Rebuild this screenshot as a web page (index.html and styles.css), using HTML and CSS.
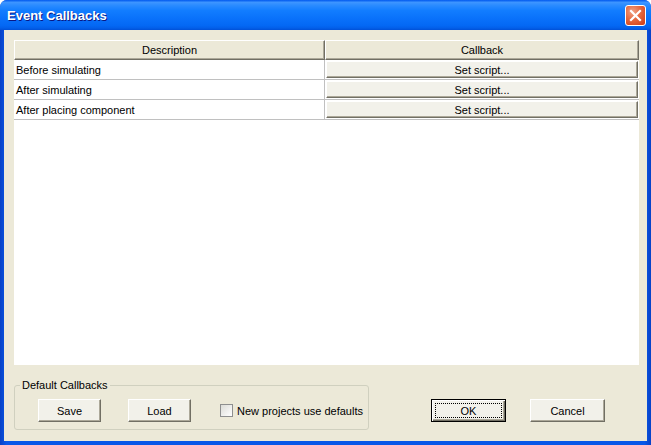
FILE: index.html
```html
<!DOCTYPE html>
<html lang="en">
<head>
    <meta name="viewport" content="width=device-width, initial-scale=1.0">
    <link rel="stylesheet" href="styles.css">
</head>
<body>
    <div class="window">
        <div class="titlebar">
            <span class="title">Event Callbacks</span>
            <button type="button" class="close">
                <svg width="13" height="13" viewBox="0 0 13 13">
                    <path d="M2 2 L11 11 M11 2 L2 11" stroke="#fff" stroke-width="2.2" stroke-linecap="square"/>
                </svg>
            </button>
        </div>
        <div class="client">
            <div class="grid">
                <div class="row head">
                    <div class="cell">Description</div>
                    <div class="cell">Callback</div>
                </div>
                <div class="row">
                    <div class="cell">Before simulating</div>
                    <div class="cell"><button type="button" class="btn slim">Set script...</button></div>
                </div>
                <div class="row">
                    <div class="cell">After simulating</div>
                    <div class="cell"><button type="button" class="btn slim">Set script...</button></div>
                </div>
                <div class="row">
                    <div class="cell">After placing component</div>
                    <div class="cell"><button type="button" class="btn slim">Set script...</button></div>
                </div>
            </div>
            <div class="bottom">
                <fieldset class="group">
                    <legend>Default Callbacks</legend>
                    <button type="button" class="btn">Save</button>
                    <button type="button" class="btn">Load</button>
                    <label class="check"><span class="box"></span>New projects use defaults</label>
                </fieldset>
                <div class="actions">
                    <button type="button" class="btn default"><span class="focus">OK</span></button>
                    <button type="button" class="btn">Cancel</button>
                </div>
            </div>
        </div>
    </div>
</body>
</html>
```

FILE: styles.css
```css
* {
    box-sizing: border-box;
}

body {
    margin: 0;
    background: #fff;
    font-family: "Liberation Sans", Arial, sans-serif;
    font-size: 11px;
    color: #000;
}

.window {
    width: 651px;
    height: 445px;
    display: flex;
    flex-direction: column;
    background: linear-gradient(90deg, #0841c6 0%, #0857e8 1%, #0857e8 99%, #0841c6 100%);
    border-radius: 7px 7px 0 0;
    overflow: hidden;
}

.titlebar {
    height: 30px;
    flex: none;
    display: flex;
    align-items: center;
    justify-content: space-between;
    padding: 0 5px 0 7px;
    background: linear-gradient(#0058ee 0%, #3d95ff 8%, #2a8bff 18%, #127dff 35%, #0a72fb 60%, #0468f4 85%, #0360ea 93%, #0050d8 100%);
}

.title {
    color: #fff;
    font-weight: bold;
    font-size: 13px;
    text-shadow: 1px 1px #0a1883;
    padding-top: 1px;
}

.close {
    width: 21px;
    height: 21px;
    padding: 0;
    margin-top: 1px;
    border: 1px solid #fff;
    border-radius: 3px;
    background: radial-gradient(circle at 35% 30%, #f0a286 0%, #e5683f 45%, #cf3a12 100%);
    display: flex;
    align-items: center;
    justify-content: center;
}

.client {
    flex: 1;
    margin: 0 4px 4px;
    background: #ece9d8;
    display: flex;
    flex-direction: column;
    padding: 10px 8px 0 10px;
}

.grid {
    height: 325px;
    background: #fff;
}

div.row {
    display: grid;
    grid-template-columns: 311px 1fr;
    height: 20px;
}

div.row > .cell {
    border-bottom: 1px solid #c0c0c0;
    border-right: 1px solid #c0c0c0;
    padding: 0 0 0 2px;
    display: flex;
    align-items: center;
}

div.row > .cell:last-child {
    padding: 1px;
    border-right: none;
}

div.head > .cell,
div.head > .cell:last-child {
    background: #ece9d8;
    border-top: 1px solid #fff;
    border-left: 1px solid #fff;
    border-right: 1px solid #716f64;
    border-bottom: 1px solid #716f64;
    box-shadow: inset -1px -1px #aca899;
    justify-content: center;
    padding: 0;
}

.btn {
    font-family: inherit;
    font-size: 11px;
    color: #000;
    width: 75px;
    height: 23px;
    padding: 0;
    margin: 0;
    background: #f2f1ea;
    border: 1px solid;
    border-color: #fff #716f64 #716f64 #fff;
    box-shadow: inset -1px -1px #aca899;
}

.btn.slim {
    width: 100%;
    height: 17px;
}

.bottom {
    margin-top: auto;
    display: flex;
    align-items: flex-end;
    padding-bottom: 11px;
}

.group {
    width: 355px;
    margin: 0;
    padding: 7px 0 7px 23px;
    border: 1px solid #d0d0bf;
    border-radius: 3px;
    display: flex;
    align-items: center;
}

.group legend {
    padding: 0 2px;
    margin-left: -18px;
    line-height: 13px;
}

.group .btn {
    width: 63px;
    margin-right: 27px;
}

.group .btn + .btn {
    margin-right: 29px;
}

.check {
    display: flex;
    align-items: center;
}

.box {
    width: 13px;
    height: 13px;
    margin-right: 4px;
    border: 1px solid #8e8f8f;
    background: linear-gradient(135deg, #dcdcd7, #fff);
}

.actions {
    display: flex;
    gap: 24px;
    margin-left: 62px;
    padding-bottom: 8px;
}

.btn.default {
    border: 1px solid #000;
    box-shadow: inset 1px 1px #fff, inset -1px -1px #716f64, inset -2px -2px #aca899;
    padding: 3px;
}

.focus {
    display: flex;
    height: 100%;
    align-items: center;
    justify-content: center;
    border: 1px dotted #000;
}
```
